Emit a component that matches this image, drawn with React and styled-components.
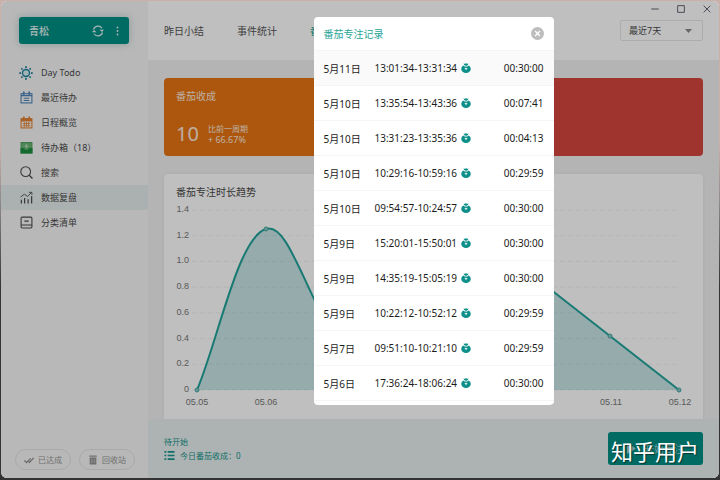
import { useState } from "react";
import styled, { createGlobalStyle } from "styled-components";

const GlobalStyle = createGlobalStyle`
  * {
    box-sizing: border-box;
  }
  body {
    margin: 0;
    background: linear-gradient(#cbb0aa 0%, #cbb0aa 30%, #8f8a8a 42%, #333 60%) fixed;
    font-family: "Noto Sans", "Noto Sans CJK SC", sans-serif;
    font-size: 10px;
    color: #4a4a4a;
  }
  button, select {
    font-family: inherit;
    font-size: inherit;
    color: inherit;
    border: none;
    background: none;
    padding: 0;
    margin: 0;
  }
`;

const Window = styled.div`
  position: relative;
  display: flex;
  margin: 1px 1px 2px;
  min-height: calc(100vh - 3px);
  border-radius: 6px;
  overflow: hidden;
  background: #f0f0f0;
`;

const Sidebar = styled.aside`
  display: flex;
  flex-direction: column;
  flex: 0 0 147px;
  padding-top: 16px;
  background: #f6f6f6;
`;

const UserBox = styled.div`
  display: flex;
  align-items: center;
  gap: 12px;
  height: 27px;
  margin: 0 19px 16px 18px;
  padding: 0 10px;
  border-radius: 3px;
  background: #008f85;
  color: #e4f4f2;
  box-shadow: 0 0 8px rgba(0, 80, 90, 0.25);
`;

const UserName = styled.strong`
  flex: 1;
  font-weight: 500;
`;

const IconButton = styled.button`
  display: flex;
  align-items: center;
  justify-content: center;
`;

const Nav = styled.nav`
  display: flex;
  flex-direction: column;
  flex: 1;
`;

const NavLink = styled.a`
  display: flex;
  align-items: center;
  gap: 8px;
  height: 25px;
  padding-left: 18px;
  font-size: 9px;
  color: #4a4a4a;
  text-decoration: none;
  background: ${(props) => (props.$active ? "#e4ebeb" : "none")};
`;

const NavIcon = styled.span`
  display: flex;
  align-items: center;
  justify-content: center;
  width: 14px;
`;

const SidebarFooter = styled.div`
  display: flex;
  gap: 8px;
  padding: 0 0 8px 14px;
`;

const Pill = styled.button`
  display: flex;
  align-items: center;
  justify-content: center;
  gap: 4px;
  width: 56px;
  height: 21px;
  border: 1px solid #e2e2e2;
  border-radius: 11px;
  font-size: 8px;
  color: #949494;
`;

const Main = styled.main`
  display: flex;
  flex-direction: column;
  flex: 1;
  min-width: 0;
`;

const Header = styled.header`
  height: 59px;
  background: #fff;
`;

const WindowBar = styled.div`
  display: flex;
  justify-content: flex-end;
  align-items: center;
  gap: 16px;
  height: 16px;
  padding-right: 7px;
  color: #445;
`;

const TabRow = styled.div`
  display: flex;
  align-items: center;
  gap: 33px;
  height: 27px;
  padding: 0 16px;
`;

const Tab = styled.button`
  color: ${(props) => (props.$active ? "#0aa08f" : "#555")};
`;

const SelectWrapper = styled.label`
  display: flex;
  align-items: center;
  width: 83px;
  height: 21px;
  margin-left: auto;
  padding: 0 10px 0 8px;
  border: 1px solid #e6e6e6;
  border-radius: 2px;
  font-size: 9px;
`;

const RangeSelect = styled.select`
  flex: 1;
  appearance: none;
  outline: none;
`;

const Content = styled.div`
  display: flex;
  flex-direction: column;
  flex: 1;
  gap: 18px;
  padding: 18px 16px 0;
`;

const CardRow = styled.div`
  display: grid;
  grid-template-columns: 1fr 1fr;
  gap: 16px;
`;

const StatCard = styled.section`
  display: flex;
  flex-direction: column;
  justify-content: space-between;
  height: 78px;
  padding: 10px 12px;
  border-radius: 4px;
  background: ${(props) => props.$color};
  color: #fbe9dc;
`;

const CardTitle = styled.h2`
  margin: 0;
  font-size: 10px;
  font-weight: 400;
  line-height: 16px;
`;

const StatRow = styled.div`
  display: flex;
  align-items: center;
  gap: 9px;
`;

const StatNumber = styled.span`
  font-size: 20px;
  line-height: 24px;
`;

const StatLabel = styled.div`
  font-size: 8px;
  line-height: 11px;
`;

const StatChange = styled.div`
  font-size: 9px;
  line-height: 11px;
`;

const ChartCard = styled.section`
  flex: 1;
  padding-top: 10px;
  border-radius: 4px 4px 0 0;
  background: #fff;
  box-shadow: 0 0 4px rgba(0, 0, 0, 0.05);

  h2 {
    padding-left: 12px;
  }
`;

const ChartSvg = styled.svg`
  display: block;
  width: 100%;
  font-family: "Liberation Sans", sans-serif;
  font-size: 9px;
`;

const Footer = styled.footer`
  display: flex;
  align-items: center;
  justify-content: space-between;
  height: 59px;
  padding: 0 16px;
  background: #e7efef;
  color: #14938a;
  font-size: 8px;
  line-height: 14px;
`;

const FooterLine = styled.div`
  display: flex;
  align-items: center;
  gap: 5px;
`;

const StartButton = styled.button`
  display: flex;
  align-items: center;
  justify-content: center;
  gap: 8px;
  width: 95px;
  height: 33px;
  border-radius: 3px;
  background: #008f85;
  color: #9dcdc9;
  font-size: 10px;
`;

const Overlay = styled.div`
  position: absolute;
  inset: 0;
  display: flex;
  justify-content: center;
  align-items: flex-start;
  padding: 16px 0 0 147px;
  background: rgba(0, 0, 0, 0.25);
`;

const Modal = styled.div`
  width: 240px;
  padding-bottom: 4px;
  border-radius: 4px;
  overflow: hidden;
  background: #fff;
`;

const ModalHeader = styled.div`
  display: flex;
  align-items: center;
  justify-content: space-between;
  height: 33px;
  padding: 0 10px;
  color: #2aa598;
`;

const Records = styled.table`
  width: 100%;
  border-collapse: collapse;
  color: #1c1c1c;

  tr {
    height: 35px;
    border-top: 1px solid #f5f5f5;
  }
  tr:first-child {
    background: #fafafa;
  }
  tr:last-child {
    border-bottom: 1px solid #f5f5f5;
  }
  td {
    padding: 0;
  }
`;

const DateCell = styled.td`
  width: 61px;

  && {
    padding-left: 10px;
  }
`;

const DurationCell = styled.td`
  text-align: right;

  && {
    padding-right: 10px;
  }
`;

const TimeSpan = styled.div`
  display: flex;
  align-items: center;
  gap: 4px;
`;

const Watermark = styled.div`
  position: absolute;
  right: 20px;
  bottom: 11px;
  font-size: 22px;
  line-height: 32px;
  color: #fff;
  text-shadow: 1px 1px 1px rgba(0, 0, 0, 0.5);
  pointer-events: none;
`;

const Svg = ({ size = 13, box = 24, children }) => (
  <svg
    width={size}
    height={size}
    viewBox={`0 0 ${box} ${box}`}
    fill="none"
    stroke="currentColor"
    strokeWidth="2"
    aria-hidden="true"
  >
    {children}
  </svg>
);

const SyncIcon = () => (
  <Svg size={12}>
    <path d="M3 9a9.500 9.500 0 0 1 17-2.500M21 15a9.500 9.500 0 0 1-17 2.500" strokeWidth="2.400" />
    <path d="M15 9.500h9L20 14zM9 14.500H0L4 10z" fill="currentColor" stroke="none" />
  </Svg>
);

const SunIcon = () => (
  <Svg size={14}>
    <g stroke="#1b7f9c">
      <circle cx="12" cy="12" r="6" fill="#d9f3f5" strokeWidth="2.4" />
      <path
        d="M12 0.5v3M12 20.5v3M0.5 12h3M20.5 12h3M4 4l2 2M18 18l2 2M4 20l2-2M18 6l2-2"
        strokeWidth="3"
      />
    </g>
  </Svg>
);

const CalendarIcon = ({ color, grid }) => (
  <Svg>
    <g stroke={color}>
      <rect x="2" y="5" width="20" height="17" />
      <path d="M2 8.500h20" />
      <path d="M7 1v6M17 1v6" strokeWidth="3" />
      {grid ? (
        <>
          <path d="M2 7h20" strokeWidth="5" />
          <path d="M5 14h14M5 18h14M8 11v9M12 11v9M16 11v9" strokeWidth="1.500" />
        </>
      ) : (
        <path d="M7 13.500h10M7 17.500h10" />
      )}
    </g>
  </Svg>
);

const BoxIcon = () => (
  <Svg>
    <path d="M2 3h20v19H2z" fill="#6cb576" stroke="#4fa25f" />
    <path d="M1 13h7l1 3h6l1-3h7v10H1z" fill="#1f8f42" stroke="none" />
    <path d="M12 5v6M9 8.500l3 3 3-3" stroke="#b5dcbc" />
  </Svg>
);

const SearchIcon = () => (
  <Svg>
    <circle cx="10.500" cy="10.500" r="9" />
    <path d="M17 17l6 6" strokeWidth="2.500" />
  </Svg>
);

const TrendIcon = () => (
  <Svg>
    <path d="M2.500 23v-7M8.500 23V13M15 23v-8M21.500 23V9" strokeWidth="2.200" />
    <path d="M1 11l7-5 6 4 7-7M16.500 2.500H22V7" strokeWidth="1.600" />
  </Svg>
);

const ListBoxIcon = () => (
  <Svg>
    <rect x="2" y="2" width="20" height="20" rx="2" />
    <path d="M2 16.500h20M8 9.500h8" />
  </Svg>
);

const TomatoIcon = () => (
  <svg width="10" height="10" viewBox="0 0 20 20" aria-hidden="true">
    <ellipse cx="10" cy="11.800" rx="9.500" ry="8" fill="#0c8f88" />
    <path d="M4.500 3.500L10 5.500l5.500-2-2.500 3.500H7z" fill="#fff" />
    <path d="M5 1l4 1.200V0h2v2.200L15 1l-1.500 3L10 5 6.500 4z" fill="#0c8f88" />
    <path d="M10 8.500l1 2.200 2.500.8-2.500 1.200-1 2.300-1-2.300-2.500-1.200 2.500-.8z" fill="#fff" />
  </svg>
);

const navItems = [
  { label: "Day Todo", icon: <SunIcon /> },
  { label: "最近待办", icon: <CalendarIcon color="#4a80b8" /> },
  { label: "日程概览", icon: <CalendarIcon color="#e08030" grid /> },
  { label: "待办箱（18）", icon: <BoxIcon /> },
  { label: "搜索", icon: <SearchIcon /> },
  { label: "数据复盘", icon: <TrendIcon />, active: true },
  { label: "分类清单", icon: <ListBoxIcon /> },
];

const records = [
  ["5月11日", "13:01:34-13:31:34", "00:30:00"],
  ["5月10日", "13:35:54-13:43:36", "00:07:41"],
  ["5月10日", "13:31:23-13:35:36", "00:04:13"],
  ["5月10日", "10:29:16-10:59:16", "00:29:59"],
  ["5月10日", "09:54:57-10:24:57", "00:30:00"],
  ["5月9日", "15:20:01-15:50:01", "00:30:00"],
  ["5月9日", "14:35:19-15:05:19", "00:30:00"],
  ["5月9日", "10:22:12-10:52:12", "00:29:59"],
  ["5月7日", "09:51:10-10:21:10", "00:29:59"],
  ["5月6日", "17:36:24-18:06:24", "00:30:00"],
];

const yLabels = ["0", "0.2", "0.4", "0.6", "0.8", "1.0", "1.2", "1.4"];
const xLabels = ["05.05", "05.06", "05.07", "05.08", "05.09", "05.10", "05.11", "05.12"];
const curve =
  "M33 190C54 141 74 37 102 29C122 23 136 76 171 141C190 175 215 165 240 150C265 135 285 72 308 62C330 55 350 62 377 82L446 136L515 190";
const dots = [
  [33, 190],
  [102, 29],
  [446, 136],
  [515, 190],
];

const TrendChart = () => (
  <ChartSvg viewBox="0 0 539 218" role="img" aria-label="番茄专注时长趋势">
    {yLabels.map((label, i) => {
      const y = 190 - (i * 180) / 7;
      return (
        <g key={label}>
          <path d={`M28 ${y}H515`} stroke="#f0f2f2" strokeDasharray="5 3" />
          <text x="25" y={y + 2} textAnchor="end" fill="#777">
            {label}
          </text>
        </g>
      );
    })}
    <path d={`${curve}Z`} fill="#00858f" fillOpacity="0.22" />
    <path d={curve} fill="none" stroke="#22a39b" strokeWidth="2" />
    {dots.map(([x, y]) => (
      <circle key={x} cx={x} cy={y} r="2" fill="#8ac4c1" stroke="#45aaa4" />
    ))}
    {xLabels.map((label, i) => (
      <text key={label} x={33 + i * 69} y="205" textAnchor="middle" fill="#777">
        {label}
      </text>
    ))}
  </ChartSvg>
);

const App = () => {
  const [range, setRange] = useState("7");
  const [open, setOpen] = useState(true);

  return (
    <>
      <GlobalStyle />
      <Window>
        <Sidebar>
          <UserBox>
            <UserName>青松</UserName>
            <IconButton aria-label="同步">
              <SyncIcon />
            </IconButton>
            <IconButton aria-label="更多">
              <svg width="3" height="10" viewBox="0 0 3 10" fill="currentColor">
                <circle cx="1.5" cy="1.5" r="0.9" />
                <circle cx="1.5" cy="5" r="0.9" />
                <circle cx="1.5" cy="8.5" r="0.9" />
              </svg>
            </IconButton>
          </UserBox>
          <Nav>
            {navItems.map((item) => (
              <NavLink key={item.label} href="#" $active={item.active}>
                <NavIcon>{item.icon}</NavIcon>
                {item.label}
              </NavLink>
            ))}
          </Nav>
          <SidebarFooter>
            <Pill>
              <Svg size={10}>
                <path d="M1 13l5 5L16 8M11 16l2 2L23 7" strokeWidth="3" />
              </Svg>
              已达成
            </Pill>
            <Pill>
              <Svg size={10}>
                <path d="M4 6h16v17H4zM3 1h18v3H3z" fill="currentColor" stroke="none" />
                <path d="M9 10v9M15 10v9" stroke="#ccc" />
              </Svg>
              回收站
            </Pill>
          </SidebarFooter>
        </Sidebar>

        <Main>
          <Header>
            <WindowBar>
              <IconButton aria-label="最小化">
                <Svg size={10}>
                  <path d="M3 12h18" />
                </Svg>
              </IconButton>
              <IconButton aria-label="最大化">
                <Svg size={10}>
                  <path d="M4 4h16v16H4z" />
                </Svg>
              </IconButton>
              <IconButton aria-label="关闭">
                <Svg size={10}>
                  <path d="M4 4l16 16M20 4L4 20" />
                </Svg>
              </IconButton>
            </WindowBar>
            <TabRow>
              <Tab>昨日小结</Tab>
              <Tab>事件统计</Tab>
              <Tab $active>番茄收成</Tab>
              <SelectWrapper>
                <RangeSelect
                  aria-label="时间范围"
                  value={range}
                  onChange={(event) => setRange(event.target.value)}
                >
                  <option value="7">最近7天</option>
                  <option value="30">最近30天</option>
                </RangeSelect>
                <svg width="7" height="4" viewBox="0 0 7 4" fill="#888">
                  <path d="M0 0h7L3.500 4z" />
                </svg>
              </SelectWrapper>
            </TabRow>
          </Header>

          <Content>
            <CardRow>
              <StatCard $color="#e77413">
                <CardTitle>番茄收成</CardTitle>
                <StatRow>
                  <StatNumber>10</StatNumber>
                  <div>
                    <StatLabel>比前一周期</StatLabel>
                    <StatChange>+ 66.67%</StatChange>
                  </div>
                </StatRow>
              </StatCard>
              <StatCard $color="#d5453d" />
            </CardRow>
            <ChartCard>
              <CardTitle>番茄专注时长趋势</CardTitle>
              <TrendChart />
            </ChartCard>
          </Content>

          <Footer>
            <div>
              <div>待开始</div>
              <FooterLine>
                <Svg size={11}>
                  <path d="M1 4h4M1 12h4M1 20h4M8 4h15M8 12h15M8 20h15" strokeWidth="3.500" />
                </Svg>
                今日番茄收成：0
              </FooterLine>
            </div>
            <StartButton>
              <svg width="9" height="11" viewBox="0 0 9 11" fill="currentColor">
                <path d="M0 0l9 5.500L0 11z" />
              </svg>
              开始专注
            </StartButton>
          </Footer>
        </Main>

        {open && (
          <Overlay>
            <Modal role="dialog" aria-label="番茄专注记录">
              <ModalHeader>
                <CardTitle>番茄专注记录</CardTitle>
                <IconButton aria-label="关闭记录" onClick={() => setOpen(false)}>
                  <Svg>
                    <circle cx="12" cy="12" r="12" fill="#bdbdbd" stroke="none" />
                    <path d="M7.500 7.500l9 9M16.500 7.500l-9 9" stroke="#fff" strokeWidth="2.500" />
                  </Svg>
                </IconButton>
              </ModalHeader>
              <Records>
                <tbody>
                  {records.map(([date, time, duration]) => (
                    <tr key={time}>
                      <DateCell>{date}</DateCell>
                      <td>
                        <TimeSpan>
                          {time}
                          <TomatoIcon />
                        </TimeSpan>
                      </td>
                      <DurationCell>{duration}</DurationCell>
                    </tr>
                  ))}
                </tbody>
              </Records>
            </Modal>
          </Overlay>
        )}
        <Watermark>知乎用户</Watermark>
      </Window>
    </>
  );
};

export default App;
